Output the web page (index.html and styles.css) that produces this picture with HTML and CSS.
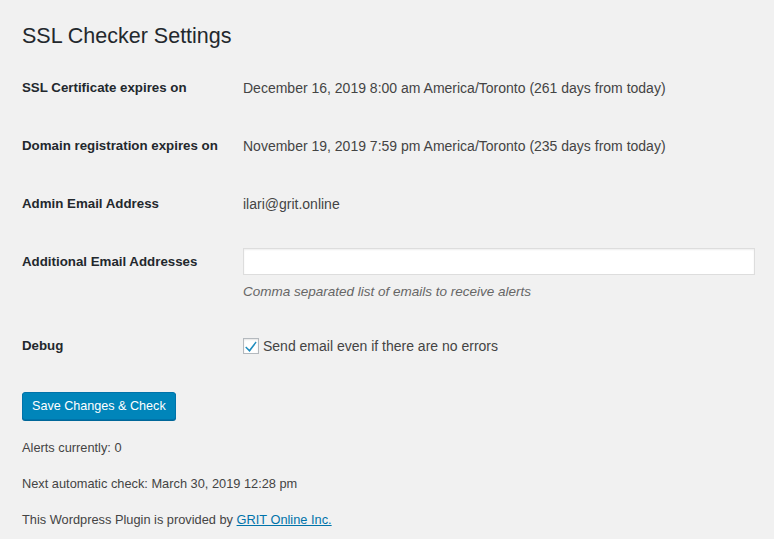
FILE: index.html
```html
<!DOCTYPE html>
<html>
<head>
<meta charset="utf-8">
<link rel="stylesheet" href="styles.css">
</head>
<body>
<div class="wrap">
  <h1 class="title">SSL Checker Settings</h1>
  <div class="form-table">
    <div class="row">
      <div class="th">SSL Certificate expires on</div>
      <div class="td">December 16, 2019 8:00 am America/Toronto (261 days from today)</div>
    </div>
    <div class="row">
      <div class="th">Domain registration expires on</div>
      <div class="td">November 19, 2019 7:59 pm America/Toronto (235 days from today)</div>
    </div>
    <div class="row">
      <div class="th">Admin Email Address</div>
      <div class="td">ilari@grit.online</div>
    </div>
    <div class="row row-input">
      <div class="th">Additional Email Addresses</div>
      <div class="td td-input">
        <input class="text-input" type="text">
        <p class="description">Comma separated list of emails to receive alerts</p>
      </div>
    </div>
    <div class="row">
      <div class="th">Debug</div>
      <div class="td">
        <label class="check-label">
          <span class="checkbox"><svg width="14" height="14" viewBox="0 0 14 14"><path d="M2.2 7.4 L5.4 10.6 L11.6 2.6 L12.6 3.6 L5.6 13 L1.2 8.4 Z" fill="#1e8cbe"/></svg></span>
          Send email even if there are no errors
        </label>
      </div>
    </div>
  </div>
  <button class="button-primary" type="button">Save Changes &amp; Check</button>
  <p class="note">Alerts currently: 0</p>
  <p class="note">Next automatic check: March 30, 2019 12:28 pm</p>
  <p class="note">This Wordpress Plugin is provided by <a href="#" class="link">GRIT Online Inc.</a></p>
</div>
</body>
</html>
```
FILE: styles.css
```css
html, body {
  margin: 0;
  padding: 0;
  background: #f1f1f1;
}
body {
  font-family: "Liberation Sans", Arial, sans-serif;
  color: #444;
  font-size: 14px;
}
.wrap {
  padding: 1px 19px 0 22px;
}
.title {
  margin: 0;
  padding-top: 22px;
  font-size: 21.5px;
  line-height: 26px;
  font-weight: 400;
  color: #23282d;
}
.form-table {
  margin-top: 10px;
  display: flex;
  flex-direction: column;
}
.row {
  display: flex;
  align-items: flex-start;
}
.th {
  width: 221px;
  flex: none;
  padding: 20px 0;
  line-height: 18px;
  font-size: 13.3px;
  font-weight: 700;
  color: #23282d;
}
.td {
  flex: 1;
  padding: 20px 0;
  line-height: 18px;
  color: #444;
}
.td-input {
  padding: 15px 0 15px 0;
}
.text-input {
  display: block;
  box-sizing: border-box;
  width: 100%;
  height: 27px;
  margin: 0;
  padding: 3px 5px;
  border: 1px solid #ddd;
  background: #fff;
  box-shadow: inset 0 1px 2px rgba(0,0,0,.07);
  font: inherit;
}
.description {
  margin: 7px 0 0;
  line-height: 20px;
  font-size: 13.5px;
  font-style: italic;
  color: #666;
}
.check-label {
  display: flex;
  align-items: center;
  gap: 4px;
}
.checkbox {
  box-sizing: border-box;
  width: 16px;
  height: 16px;
  border: 1px solid #b4b9be;
  background: #fff;
  box-shadow: inset 0 1px 2px rgba(0,0,0,.1);
  display: flex;
  align-items: center;
  justify-content: center;
}
.checkbox svg {
  display: block;
}
.button-primary {
  display: block;
  margin: 17px 0 0;
  height: 28px;
  padding: 0 9px 1px;
  background: #0085ba;
  border: 1px solid #0073aa;
  border-radius: 3px;
  box-shadow: 0 1px 0 #006799;
  color: #fff;
  font-family: inherit;
  font-size: 12.6px;
  line-height: 26px;
}
.note {
  margin: 18px 0 0;
  font-size: 12.8px;
  line-height: 20px;
  color: #444;
}
.note + .note {
  margin-top: 16px;
}
.link {
  color: #0073aa;
  text-decoration: underline;
}
```
